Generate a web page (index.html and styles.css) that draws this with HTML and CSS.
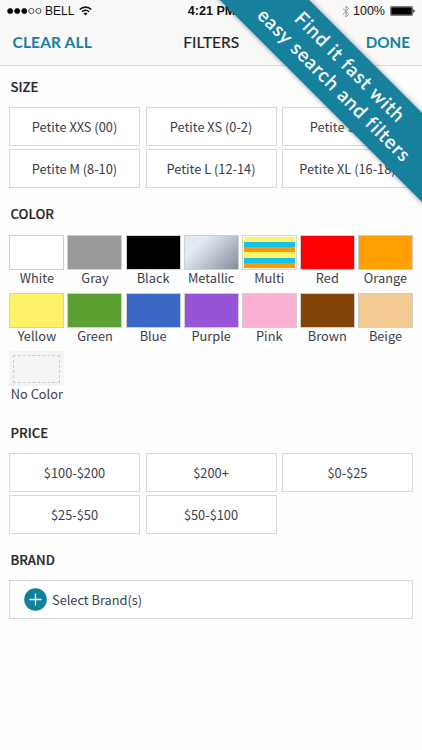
FILE: index.html
```html
<!DOCTYPE html>
<html lang="en">
<head>
<meta charset="utf-8">
<title>Filters</title>
<link rel="stylesheet" href="styles.css">
</head>
<body>
<div class="screen">
  <header class="top">
    <div class="status">
      <div class="carrier">
        <svg class="signal" width="36" height="8" viewBox="0 0 36 8"><g stroke="#111" stroke-width=".7"><circle cx="3.2" cy="4" r="2.6" fill="#000"/><circle cx="10.2" cy="4" r="2.6" fill="#000"/><circle cx="17.3" cy="4" r="2.6" fill="#000"/><circle cx="24.3" cy="4" r="2.6" fill="none"/><circle cx="31.4" cy="4" r="2.6" fill="none"/></g></svg>
        <span class="bell">BELL</span>
        <svg class="wifi" width="13" height="10" viewBox="0 0 13 10"><g fill="none" stroke="#111" stroke-width="1.6"><path d="M.7 3.5a8.2 8.2 0 0 1 11.6 0"/><path d="M2.9 5.8a5.1 5.1 0 0 1 7.2 0"/></g><path d="M4.5 7.4a2.9 2.9 0 0 1 4 0l-2 2.2z" fill="#111"/></svg>
      </div>
      <div class="clock">4:21 PM</div>
      <div class="power">
        <svg width="8" height="13" viewBox="0 0 8 13"><path d="M.8 3.6l6 5.6L4 12V1l2.8 2.8-6 5.6" fill="none" stroke="#999" stroke-width="1"/></svg>
        <span>100%</span>
        <svg class="battery" width="25" height="10" viewBox="0 0 25 10"><rect x=".35" y=".35" width="22.3" height="9.3" rx="1.2" fill="#fff" stroke="#222" stroke-width=".7"/><rect x="1.2" y="1.2" width="20.6" height="7.6" rx=".5"/><path d="M23.3 3.2q1.3.5 1.3 1.8t-1.3 1.8z"/></svg>
      </div>
    </div>
    <nav class="nav"><span class="link clear">CLEAR ALL</span><h1>FILTERS</h1><span class="link done">DONE</span></nav>
  </header>
  <main>
    <h2 class="h-size">SIZE</h2>
    <div class="boxes">
      <div class="box">Petite XXS (00)</div><div class="box">Petite XS (0-2)</div><div class="box">Petite S (4-6)</div>
      <div class="box">Petite M (8-10)</div><div class="box">Petite L (12-14)</div><div class="box">Petite XL (16-18)</div>
    </div>
    <h2 class="h-color">COLOR</h2>
    <div class="colors">
      <div class="color"><i class="sw white"></i><span>White</span></div>
      <div class="color"><i class="sw gray"></i><span>Gray</span></div>
      <div class="color"><i class="sw black"></i><span>Black</span></div>
      <div class="color"><i class="sw metallic"></i><span>Metallic</span></div>
      <div class="color"><i class="sw multi"></i><span>Multi</span></div>
      <div class="color"><i class="sw red"></i><span>Red</span></div>
      <div class="color"><i class="sw orange"></i><span>Orange</span></div>
      <div class="color"><i class="sw yellow"></i><span>Yellow</span></div>
      <div class="color"><i class="sw green"></i><span>Green</span></div>
      <div class="color"><i class="sw blue"></i><span>Blue</span></div>
      <div class="color"><i class="sw purple"></i><span>Purple</span></div>
      <div class="color"><i class="sw pink"></i><span>Pink</span></div>
      <div class="color"><i class="sw brown"></i><span>Brown</span></div>
      <div class="color"><i class="sw beige"></i><span>Beige</span></div>
      <div class="color"><i class="sw none"></i><span>No Color</span></div>
    </div>
    <h2 class="h-price">PRICE</h2>
    <div class="boxes">
      <div class="box">$100-$200</div><div class="box">$200+</div><div class="box">$0-$25</div>
      <div class="box">$25-$50</div><div class="box">$50-$100</div>
    </div>
    <h2 class="h-brand">BRAND</h2>
    <div class="brand">
      <svg width="23" height="23" viewBox="0 0 23 23"><circle cx="11.5" cy="11.5" r="11.3" fill="#10809d"/><path d="M5.5 11.5h12M11.5 5.5v12" stroke="#fff" stroke-width="1.3"/></svg>
      <span>Select Brand(s)</span>
    </div>
  </main>
  <div class="ribbon"><span class="line one">Find it fast with</span><span class="line two">easy search and filters</span></div>
</div>
</body>
</html>
```
FILE: styles.css
```css
* { box-sizing: border-box; }
body { margin: 0; background: #fefefe; }
.screen {
  position: relative;
  width: 422px;
  height: 750px;
  overflow: hidden;
  background: #fefefe;
  color: #3b3d4b;
  font: 12.8px/20px "Noto Sans CJK SC", "Noto Sans", sans-serif;
}
.top { height: 66px; background: #f9f9f9; border-bottom: 1px solid #d9d9d9; }
.status {
  display: grid;
  grid-template-columns: 1fr auto 1fr;
  height: 22px;
  padding: 0 7px;
  align-items: center;
  color: #111;
  font: 12.5px/22px "Liberation Sans", Arial, sans-serif;
}
.carrier, .power { display: flex; align-items: center; }
.signal { margin-right: 2px; }
.bell { font-size: 12px; }
.wifi { margin-left: 5px; }
.clock { font-weight: bold; font-size: 12.6px; padding-left: 1px; }
.power { justify-content: flex-end; gap: 3px; }
.battery { margin-left: 2px; }
.nav {
  display: grid;
  grid-template-columns: 1fr auto 1fr;
  height: 41px;
  padding: 0 12px 0 12.5px;
  align-items: center;
  font: 15.5px/41px Lato, sans-serif;
}
h1 { margin: 0; font: inherit; color: #222; -webkit-text-stroke: .2px #222; }
.link { color: #15809d; font-weight: bold; }
.clear { letter-spacing: .15px; }
.done { text-align: right; font-size: 15.2px; }
main { padding: 0 9px; }
h2 { margin: 0 0 0 1.5px; height: 20px; font-size: 13.2px; line-height: 19px; font-weight: 500; color: #282828; -webkit-text-stroke: .2px #282828; }
.h-size { margin-top: 11px; margin-bottom: 10px; }
.h-color { margin-top: 16px; margin-bottom: 11px; }
.h-price { margin-top: 14px; margin-bottom: 10px; }
.h-brand { margin-top: 16px; margin-bottom: 10px; }
.boxes { display: grid; grid-template-columns: repeat(3, 131px); grid-auto-rows: 39px; column-gap: 5.5px; row-gap: 3px; }
.box { display: flex; align-items: center; justify-content: center; padding-top: 1px; border: 1px solid #d8d8d9; background: #fff; }
.colors { display: grid; grid-template-columns: repeat(7, 55px); grid-auto-rows: 58px; column-gap: 3.1px; padding-left: .4px; }
.color { display: flex; flex-direction: column; align-items: center; line-height: 16px; white-space: nowrap; }
.sw { display: block; width: 55px; height: 35px; border: 1px solid #cfcfcf; }
.white { background: #fff; }
.gray { background: #999; }
.black { background: #000; }
.metallic { background: linear-gradient(135deg, #e0e7f2 0%, #e5ebf6 25%, #b9c0cc 60%, #858d9a 100%); }
.multi {
  border-color: #d8d8d8;
  padding: 1px;
  background: linear-gradient(#fff36a 0 5px, #12c3ee 5px 10px, #ff9800 10px 15px, #fff36a 15px 20.5px, #12c3ee 20.5px 25.5px, #ff9800 25.5px) content-box, #f8f8f8;
}
.red { background: #f00; }
.orange { background: #ffa000; }
.yellow { background: #fff167; }
.green { background: #5da032; }
.blue { background: #3b68c8; }
.purple { background: #9854d8; }
.pink { background: #fab0d2; }
.brown { background: #834507; }
.beige { background: #f2ca91; }
.none { padding: 4px; border: 0; background: #f4f4f4; }
.none::before { content: ""; display: block; height: 26px; border: 1px dashed #ccc; }
.brand { display: flex; align-items: center; gap: 5px; height: 39px; width: 404px; padding: 0 0 0 14px; border: 1px solid #d8d8d9; background: #fff; }
.ribbon {
  position: absolute;
  left: 91.5px;
  top: 46px;
  width: 500px;
  height: 63px;
  padding-top: 6px;
  transform: rotate(45deg);
  background: #17809c;
  box-shadow: 0 0 5px rgba(0, 0, 0, .45);
  color: #fff;
  text-align: center;
  font: 19px/24px Lato, sans-serif;
  -webkit-text-stroke: .3px #fff;
}
.line { display: block; }
.one { margin-left: -3px; letter-spacing: 1px; }
.two { letter-spacing: 1.05px; }
```
